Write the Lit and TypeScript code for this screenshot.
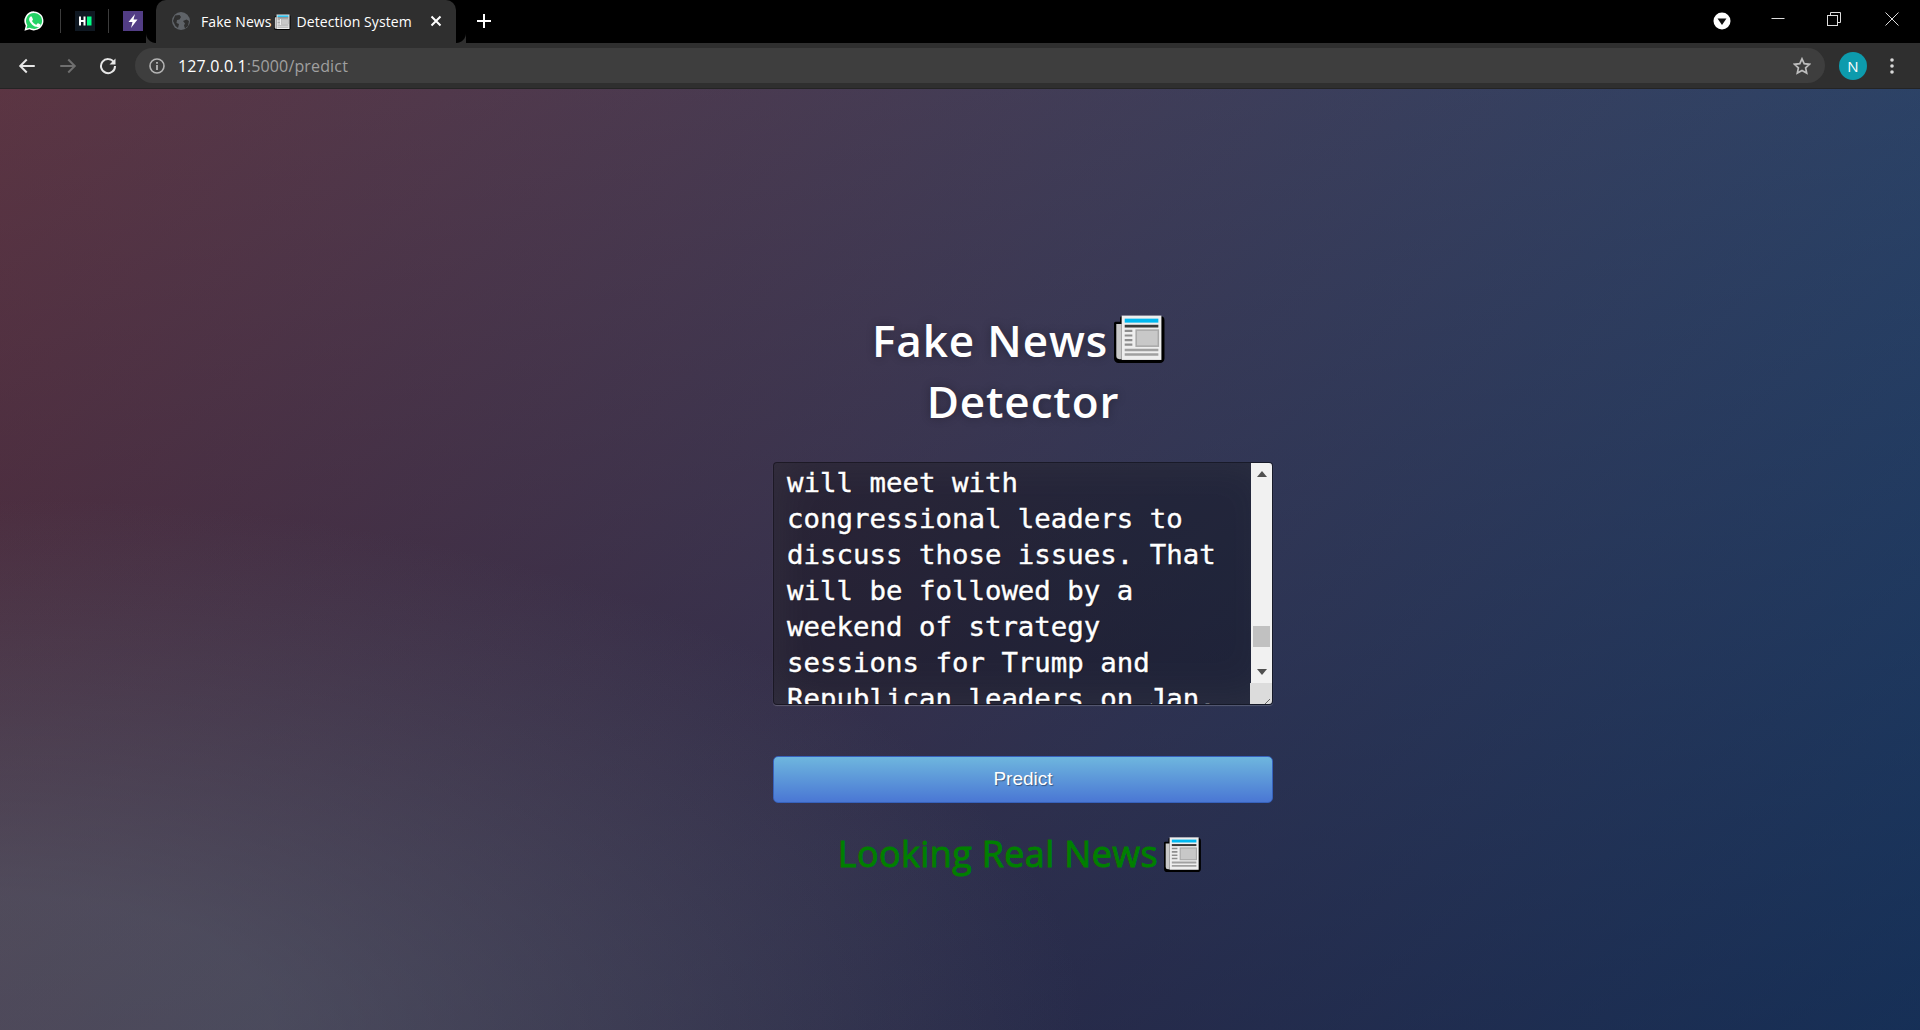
import { LitElement, html, css, svg } from 'lit';
import { customElement } from 'lit/decorators.js';

const newspaper = svg`
  <path d="M5 4.5h25.5a1.5 1.5 0 0 1 1.5 1.5v25a2 2 0 0 1-2 2H3a2 2 0 0 1-2-2V8h4z" fill="#000" stroke="#000" stroke-width="2" stroke-linejoin="round"/>
  <path d="M1.5 8.5H5v23H3.500a2 2 0 0 1-2-2z" fill="#c9c9c9"/>
  <rect x="5" y="3" width="26" height="29" fill="#eeeeee"/>
  <rect x="7" y="5" width="22" height="2.6" fill="#00b8f0"/>
  <rect x="7" y="9" width="22" height="1.8" fill="#3a3a3a"/>
  <rect x="14.5" y="12.5" width="14.5" height="10.5" fill="#c8c8c8" stroke="#a8a8a8"/>
  <path d="M7 13h5M7 16h5M7 19h5M7 22h5" stroke="#8e8e8e" stroke-width="1.4"/>
  <path d="M7 25.5h22M7 28.5h22" stroke="#a0a0a0" stroke-width="1.6"/>
`;

const lines = [
  'will meet with',
  'congressional leaders to',
  'discuss those issues. That',
  'will be followed by a',
  'weekend of strategy',
  'sessions for Trump and',
  'Republican leaders on Jan.',
];

@customElement('browser-bar')
class BrowserBar extends LitElement {
  static styles = css`
    :host {
      display: block;
      font-family: 'Open Sans', 'Noto Sans', sans-serif;
      color: #fff;
    }
    svg { display: block; flex: none; }

    .strip {
      height: 43px;
      box-sizing: border-box;
      padding-bottom: 1px;
      background: #000;
      display: flex;
      align-items: center;
    }
    .pin { width: 47px; display: flex; justify-content: center; flex: none; }
    .pin.first { width: 60px; padding-left: 8px; box-sizing: border-box; }
    .sep { width: 1px; height: 24px; background: #3c3c3c; flex: none; }
    .tab {
      position: relative;
      align-self: flex-start;
      width: 300px;
      height: 43px;
      flex: none;
      box-sizing: border-box;
      background: #2f2f2f;
      border-radius: 10px 10px 0 0;
      display: flex;
      align-items: center;
      padding: 0 0 1px 16px;
      font-size: 14px;
      letter-spacing: 0.08px;
    }
    .tab::before, .tab::after {
      content: '';
      position: absolute;
      bottom: 0;
      width: 10px;
      height: 10px;
      background: radial-gradient(circle at 0 0, #000 9.5px, #2f2f2f 10.5px);
    }
    .tab::before { left: -10px; transform: scaleX(-1); }
    .tab::after { right: -10px; }
    .tab-title { margin-left: 11px; display: flex; align-items: center; white-space: nowrap; }
    .tab-title svg { margin: 0 6px 0 2px; }
    .tab-close { margin-left: auto; margin-right: 14px; }
    .plus { margin-left: 21px; }
    .win { margin-left: auto; display: flex; align-items: center; }
    .badge { margin-right: 19px; }
    .win-btn { width: 56px; display: flex; justify-content: center; padding-bottom: 4px; }
    .win-btn.last { width: 58px; justify-content: flex-start; padding-left: 23px; box-sizing: border-box; }

    .toolbar {
      height: 46px;
      box-sizing: border-box;
      background: #2f2f2f;
      border-bottom: 1px solid #242424;
      display: flex;
      align-items: center;
      padding-left: 16px;
    }
    .nav { width: 41.5px; flex: none; }
    .omni {
      margin-left: 18px;
      width: 1690px;
      height: 35px;
      flex: none;
      border-radius: 18px;
      background: #3e3e3e;
      display: flex;
      align-items: center;
      padding: 0 14px;
      box-sizing: border-box;
      font-size: 16px;
      letter-spacing: 0.15px;
      color: #fff;
    }
    .omni .info { margin-right: 13px; }
    .omni .dim { color: #a0a0a0; }
    .omni .star { margin-left: auto; }
    .avatar {
      margin-left: 14px;
      width: 28px;
      height: 28px;
      flex: none;
      border-radius: 50%;
      background: #0d9bad;
      display: flex;
      align-items: center;
      justify-content: center;
      font-size: 15px;
    }
    .dots { margin-left: 23px; }
  `;

  render() {
    return html`
      <div class="strip">
        <div class="pin first">
          <svg width="22" height="22" viewBox="0 0 24 24">
            <path d="M12 1.5A10.4 10.4 0 0 0 3 17.2L1.6 22.5 7 21.1A10.4 10.4 0 1 0 12 1.5z" fill="#fff"/>
            <path d="M12 3.2a8.7 8.7 0 0 0-7.3 13.4l-.9 3.6 3.700-.9A8.7 8.7 0 1 0 12 3.2z" fill="#25d366"/>
            <path d="M8.800 7.200c-.3 0-.7.1-1 .5-.4.4-1.100 1.200-1.100 2.600 0 1.500 1.100 3 1.300 3.200.2.200 2.200 3.400 5.300 4.600 2.600 1 3.200.8 3.700.8.600-.1 1.800-.7 2-1.500.3-.7.3-1.300.2-1.500-.1-.1-.3-.2-.6-.4l-2.100-1c-.3-.1-.5-.1-.7.2l-1 1.200c-.2.200-.4.300-.7.100-.3-.2-1.300-.5-2.500-1.500-.9-.8-1.500-1.800-1.700-2.100-.2-.3 0-.5.100-.6l.5-.6c.2-.2.200-.3.300-.5.100-.2 0-.4 0-.6l-.9-2.300c-.3-.6-.5-.6-.7-.6z" fill="#fff"/>
          </svg>
        </div>
        <div class="sep"></div>
        <div class="pin">
          <svg width="20" height="20" viewBox="0 0 20 20">
            <rect width="20" height="20" fill="#0f1822"/>
            <path d="M4 5.500h2v3.500h2.500V5.500h2v9h-2V11H6v3.500H4z" fill="#fff"/>
            <rect x="12" y="5.500" width="4.500" height="9" fill="#00ff84"/>
          </svg>
        </div>
        <div class="sep"></div>
        <div class="pin">
          <svg width="20" height="20" viewBox="0 0 20 20">
            <rect width="20" height="20" fill="#523d85"/>
            <path d="M12 3 5.500 11H9.500L8 17 14.500 8.500H10.500z" fill="#fff"/>
          </svg>
        </div>
        <div class="tab">
          <svg width="18" height="18" viewBox="0 0 18 18">
            <circle cx="9" cy="9" r="9" fill="#5f6368"/>
            <path d="M3 3.500 7.500 3 9 5 7.500 7.500 5 8 4.500 11 7 12 6 16 3.500 14 1 9zM11 9l3.500-1.500L17 9l-1 5-3 2.500-1-3 1-2z" fill="#2f2f2f"/>
          </svg>
          <span class="tab-title">
            Fake News
            <svg width="17" height="17" viewBox="0 0 34 34">${newspaper}</svg>
            Detection System
          </span>
          <svg class="tab-close" width="12" height="12" viewBox="0 0 12 12">
            <path d="M1.500 1.500l9 9M10.500 1.500l-9 9" stroke="#fff" stroke-width="2"/>
          </svg>
        </div>
        <svg class="plus" width="14" height="14" viewBox="0 0 14 14">
          <path d="M7 0v14M0 7h14" stroke="#fff" stroke-width="2"/>
        </svg>
        <div class="win">
          <svg class="badge" width="18" height="18" viewBox="0 0 18 18">
            <circle cx="9" cy="9" r="8.500" fill="#fff"/>
            <path d="M4.500 6.500h9L9 13z" fill="#111"/>
          </svg>
          <div class="win-btn">
            <svg width="14" height="14" viewBox="0 0 14 14"><path d="M.5 6.500h13" stroke="#ddd"/></svg>
          </div>
          <div class="win-btn">
            <svg width="14" height="14" viewBox="0 0 14 14" fill="none" stroke="#ddd">
              <rect x=".5" y="3.500" width="10" height="10"/>
              <path d="M3.500 3.500v-3h10v10h-3"/>
            </svg>
          </div>
          <div class="win-btn last">
            <svg width="14" height="14" viewBox="0 0 14 14"><path d="M.5.500l13 13M13.500.500l-13 13" stroke="#ddd"/></svg>
          </div>
        </div>
      </div>
      <div class="toolbar">
        <svg class="nav" width="40" height="18" viewBox="0 0 40 18" fill="none" stroke="#e6e6e6" stroke-width="2">
          <path d="M18 9H4M10 2.500 3.500 9l6.500 6.500"/>
        </svg>
        <svg class="nav" width="40" height="18" viewBox="0 0 40 18" fill="none" stroke="#6f6f6f" stroke-width="2">
          <path d="M1.500 9h14M9.500 2.500 16 9l-6.500 6.500"/>
        </svg>
        <svg width="18" height="18" viewBox="0 0 18 18" fill="none">
          <path d="M15 5.500A7 7 0 1 0 16 9" stroke="#e6e6e6" stroke-width="2"/>
          <path d="M16.500 1.500v6h-6z" fill="#e6e6e6"/>
        </svg>
        <div class="omni">
          <svg class="info" width="16" height="16" viewBox="0 0 16 16" fill="none">
            <circle cx="8" cy="8" r="7" stroke="#b4b4b4" stroke-width="1.600"/>
            <path d="M8 7v5M8 4v1.800" stroke="#b4b4b4" stroke-width="1.800"/>
          </svg>
          <span>127.0.0.1<span class="dim">:5000/predict</span></span>
          <svg class="star" width="18" height="18" viewBox="0 0 18 18" fill="none">
            <path d="M9 1.800l2.200 4.900 5.300.6-3.900 3.600 1.100 5.200L9 13.400 4.300 16.100l1.100-5.200L1.500 7.300l5.300-.6z" stroke="#bdbdbd" stroke-width="1.700" stroke-linejoin="miter"/>
          </svg>
        </div>
        <div class="avatar">N</div>
        <svg class="dots" width="4" height="16" viewBox="0 0 4 16" fill="#d8d8d8">
          <circle cx="2" cy="2" r="1.800"/><circle cx="2" cy="8" r="1.800"/><circle cx="2" cy="14" r="1.800"/>
        </svg>
      </div>
    `;
  }
}

@customElement('app-root')
export class AppRoot extends LitElement {
  static styles = css`
    :host {
      display: flex;
      flex-direction: column;
      height: 1030px;
      overflow: hidden;
    }
    .page {
      flex: 1;
      display: flex;
      justify-content: center;
      padding: 221px 0 0 126px;
      box-sizing: border-box;
      background:
        radial-gradient(ellipse farthest-corner at 0% 100%, rgba(104,128,138,.4) 10%, rgba(138,114,76,0) 40%),
        linear-gradient(to bottom, rgba(57,173,219,.25) 0%, rgba(42,60,87,.4) 100%),
        linear-gradient(135deg, #670d10 0%, #092756 100%);
    }
    .login { width: 500px; display: flex; flex-direction: column; }
    h1 {
      margin: 0;
      text-align: center;
      color: #fff;
      font: 600 44px/61px 'Open Sans', sans-serif;
      letter-spacing: 0.9px;
      text-shadow: 0 0 10px rgba(0,0,0,.3);
    }
    h1 svg { vertical-align: -6px; margin: 0 8px 0 6px; }
    .result svg { vertical-align: -5px; margin: 0 6px 0 6px; }
    .area {
      position: relative;
      margin-top: 30px;
      height: 243px;
      box-sizing: border-box;
      border: 1px solid rgba(0,0,0,.3);
      border-radius: 4px;
      background: rgba(0,0,0,.3);
      box-shadow: inset 0 -5px 45px rgba(100,100,100,.2), 0 1px 1px rgba(255,255,255,.2);
      overflow: hidden;
      padding: 2px 0 0 13px;
      color: #fff;
      font: 27.4px/36px 'DejaVu Sans Mono', monospace;
      -webkit-text-stroke: 0.4px #fff;
      text-shadow: 1px 1px 1px rgba(0,0,0,.3);
    }
    .area .line { height: 36px; white-space: pre; }
    .scroll {
      position: absolute;
      top: 0;
      right: 0;
      width: 21px;
      bottom: 21px;
      background: #f1f1f1;
      display: flex;
      flex-direction: column;
      align-items: center;
    }
    .scroll .thumb {
      position: absolute;
      top: 163px;
      left: 2px;
      width: 17px;
      height: 21px;
      background: #c1c1c1;
    }
    .scroll .up { margin-top: 8px; }
    .scroll .down { margin-top: auto; margin-bottom: 8px; }
    .resizer {
      position: absolute;
      right: 0;
      bottom: 0;
      width: 22px;
      height: 21px;
      background: #dcdcdc;
    }
    button {
      margin-top: 51px;
      height: 47px;
      box-sizing: border-box;
      border: 1px solid #3762bc;
      border-radius: 5px;
      padding: 0 0 2px;
      background: linear-gradient(to bottom, #6eb6de, #4a77d4);
      color: #fff;
      font: 19px 'Liberation Sans', sans-serif;
      text-shadow: 1px 1px 1px rgba(0,0,0,.4);
    }
    .result {
      margin-top: 26px;
      text-align: center;
      color: #008000;
      font: 36px/50px 'Open Sans', sans-serif;
      letter-spacing: 0.35px;
      -webkit-text-stroke: 0.9px #008000;
    }
  `;

  render() {
    return html`
      <browser-bar></browser-bar>
      <main class="page">
        <div class="login">
          <h1>Fake News<svg width="52" height="52" viewBox="0 0 34 34">${newspaper}</svg><br />Detector</h1>
          <div class="area">
            ${lines.map((l) => html`<div class="line">${l}</div>`)}
            <div class="scroll">
              <svg class="up" width="10" height="6" viewBox="0 0 10 6"><path d="M0 6 5 0l5 6z" fill="#505050"/></svg>
              <div class="thumb"></div>
              <svg class="down" width="10" height="6" viewBox="0 0 10 6"><path d="M0 0l5 6 5-6z" fill="#505050"/></svg>
            </div>
            <div class="resizer">
              <svg width="22" height="21" viewBox="0 0 22 21" fill="none" stroke="#666">
                <path d="M10 20 20 10M15 20l5-5"/>
              </svg>
            </div>
          </div>
          <button>Predict</button>
          <div class="result">Looking Real News<svg width="38" height="38" viewBox="0 0 34 34">${newspaper}</svg></div>
        </div>
      </main>
    `;
  }
}
